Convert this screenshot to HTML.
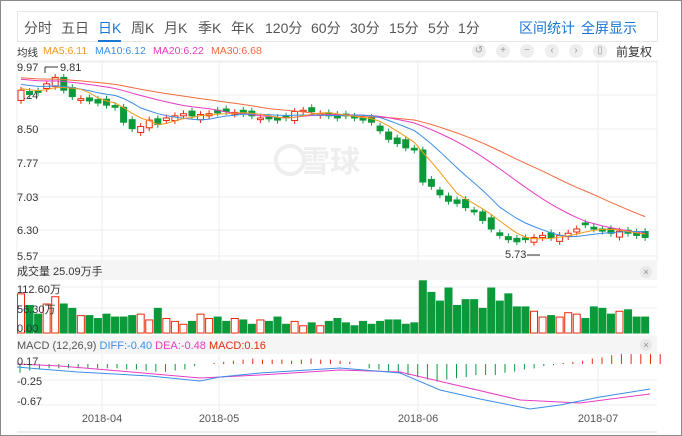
<!DOCTYPE html>
<html><head><meta charset="utf-8"><style>
html,body{margin:0;padding:0;background:#fff}
body{width:682px;height:436px;position:relative;overflow:hidden;font-family:"Liberation Sans","Noto Sans CJK SC",sans-serif}
.frame{position:absolute;left:0;top:0;width:680px;height:434px;border:1px solid #8a8a8a}
.tabs{position:absolute;left:17px;top:11px;width:639px;height:29px;border:1px solid #e6e6e6;background:#fff}
.tabs span{position:absolute;top:6px;font-size:14px;color:#555}
.tabs .a{color:#1a75d2}
.tabs .a:after{content:"";position:absolute;left:0;right:0;top:22px;height:2px;background:#1a75d2}
.tabs .r{color:#1a75d2}
.ma{position:absolute;top:45px;font-size:10.5px;white-space:nowrap}
.ic{position:absolute;top:44px;width:14px;height:14px;border-radius:7px;background:#eee;color:#999;font-size:10px;line-height:14px;text-align:center}
</style></head><body>
<div class="frame"></div>
<div class="tabs">
<span style="left:6px">分时</span><span style="left:43px">五日</span><span class="a" style="left:80px">日K</span><span style="left:113px">周K</span><span style="left:146px">月K</span><span style="left:180px">季K</span><span style="left:213px">年K</span><span style="left:247px">120分</span><span style="left:293px">60分</span><span style="left:332px">30分</span><span style="left:371px">15分</span><span style="left:410px">5分</span><span style="left:440px">1分</span>
<span class="r" style="left:501px">区间统计</span><span class="r" style="left:563px">全屏显示</span>
</div>
<span class="ma" style="left:17px;color:#333">均线</span><span class="ma" style="left:43px;color:#f39a1c">MA5:6.11</span><span class="ma" style="left:95px;color:#3b8ee6">MA10:6.12</span><span class="ma" style="left:153px;color:#e83bc2">MA20:6.22</span><span class="ma" style="left:211px;color:#f36a3e">MA30:6.68</span>
<div class="ic" style="left:472px">↺</div><div class="ic" style="left:496px">+</div><div class="ic" style="left:520px">−</div><div class="ic" style="left:545px">‹</div><div class="ic" style="left:569px">›</div><div class="ic" style="left:593px">▯</div>
<div style="position:absolute;left:616px;top:43px;font-size:12px;color:#333">前复权</div>
<svg id="s" width="682" height="436" style="position:absolute;left:0;top:0" font-family="Liberation Sans,Noto Sans CJK SC,sans-serif"></svg>
<script>
var S='';
function L(x1,y1,x2,y2,c,w){S+='<line x1="'+x1+'" y1="'+y1+'" x2="'+x2+'" y2="'+y2+'" stroke="'+c+'" stroke-width="'+(w||1)+'"/>';}
function T(x,y,t,c,s,a){S+='<text x="'+x+'" y="'+y+'" fill="'+(c||'#333')+'" font-size="'+(s||11)+'"'+(a?' text-anchor="'+a+'"':'')+'>'+t+'</text>';}
S+='<rect x="17" y="61" width="640" height="200" fill="#fff" stroke="#eee"/>';
[62,95,129,163,197,230,256].forEach(function(y){L(17,y,657,y,'#eceef2');});
[102,219,418,598].forEach(function(x){L(x,61,x,412,'#eceef2');});
T(17,71,'9.97','#333',11);T(17,99,'9.24');T(17,133,'8.50');T(17,167,'7.77');T(17,201,'7.03');T(17,234,'6.30');T(17,260,'5.57');
S+='<text x="300" y="172" fill="#eeeeee" font-size="30" font-weight="bold">雪球</text><circle cx="290" cy="160" r="14" fill="none" stroke="#eee" stroke-width="4"/>';
var c=[9.45,9.35,9.40,9.60,9.75,9.45,9.30,9.25,9.20,9.15,9.10,9.05,8.70,8.55,8.60,8.75,8.65,8.80,8.85,8.90,8.85,8.88,8.90,8.92,8.95,8.93,8.90,8.85,8.80,8.78,8.75,8.80,8.95,8.98,8.95,8.90,8.85,8.80,8.85,8.80,8.75,8.70,8.50,8.30,8.20,8.10,8.05,7.30,7.20,7.00,6.85,6.80,6.70,6.60,6.40,6.20,6.05,5.95,5.90,5.95,6.00,6.05,6.00,6.05,6.10,6.20,6.30,6.20,6.15,6.10,6.15,6.10,6.05,6.00];
var n=c.length;function X(i){return 21+i*8.55;}function Y(p){return 68+(9.97-p)*42.7;}
var o=[];for(var i=0;i<n;i++){var op=(i==0?9.3:c[i-1])+((i*37%7)-3)*0.03;if(Math.abs(op-c[i])<0.03)op+=0.05;o.push(op);}
function ma(k,pad){var pts=[];for(var i=0;i<n;i++){var s=0;for(var j=i-k+1;j<=i;j++){s+=(j<0?pad:c[j]);}pts.push(X(i).toFixed(1)+','+Y(s/k).toFixed(1));}return pts.join(' ');}
for(var i=0;i<n;i++){var up=c[i]>o[i],col=up?'#e8290b':'#0b9a3a',hi=Math.max(c[i],o[i])+0.08,lo=Math.min(c[i],o[i])-0.08,y1=Y(Math.max(c[i],o[i])),y2=Y(Math.min(c[i],o[i]));
L(X(i),Y(hi),X(i),Y(lo),col);
S+='<rect x="'+(X(i)-3)+'" y="'+y1+'" width="6" height="'+Math.max(1,y2-y1)+'" fill="'+(up?'#fff':col)+'" stroke="'+col+'" stroke-width="1"/>';}
[[30,9.75,'#f36a3e'],[20,9.72,'#e83bc2'],[10,9.6,'#3b8ee6'],[5,9.5,'#f39a1c']].forEach(function(a){S+='<polyline points="'+ma(a[0],a[1])+'" fill="none" stroke="'+a[2]+'" stroke-width="1"/>';});
L(45,67,58,67,'#333');L(45,67,45,73,'#333');T(60,71,'9.81');
L(540,255,527,255,'#333');T(505,258,'5.73');
S+='<rect x="17" y="262" width="640" height="18" fill="#f5f5f5"/>';T(17,275,'成交量 25.09万手','#333',11);
S+='<circle cx="646" cy="272" r="6" fill="#e8e8e8"/>';T(646,275,'×','#888',9,'middle');
L(17,287,657,287,'#eceef2');L(17,308,657,308,'#eceef2');
var v=[27,19,13,20,25,20,17,12,12,10,13,11,11,12,13,9,17,10,8,6,8,13,10,11,8,10,9,6,9,8,11,6,8,5,7,5,8,10,7,5,8,6,8,9,9,6,7,36,28,22,31,19,23,23,17,31,22,27,18,18,15,11,12,11,14,13,10,18,17,13,15,16,11,11];
for(var i=0;i<n;i++){var vv=v[i]||12,up=c[i]>o[i],col=up?'#e8290b':'#0b9a3a',h=vv*1.45;
S+='<rect x="'+(X(i)-3.5)+'" y="'+(333-h)+'" width="7" height="'+h+'" fill="'+(up?'#fff':col)+'" stroke="'+col+'"/>';}
T(17,293,'112.60万');T(17,313,'56.30万');T(17,332,'0.00');
S+='<rect x="17" y="336" width="640" height="18" fill="#f5f5f5"/>';
S+='<text x="17" y="349" font-size="11"><tspan fill="#555">MACD (12,26,9) </tspan><tspan fill="#3b8ee6">DIFF:-0.40 </tspan><tspan fill="#e83bc2">DEA:-0.48 </tspan><tspan fill="#e8290b">MACD:0.16</tspan></text>';
S+='<circle cx="646" cy="345" r="6" fill="#e8e8e8"/>';T(646,348,'×','#888',9,'middle');
L(17,380,657,380,'#eceef2');L(17,405,657,405,'#eceef2');
var m=[-8,-6,-5,-4,-4,-4,-4,-4,-4,-4,-4,-5,-5,-6,-7,-7,-6,-5,-2,0,1,2,3,4,5,4,4,4,3,4,5,4,4,3,2,0,-4,-5,-7,-8,-10,-12,-14,-16,-14,-13,-12,-10,-10,-10,-8,-7,-5,-4,-2,-1,1,2,3,5,6,8,9,9,9,9,9];
for(var i=0;i<m.length;i++){var x=20+i*9.7,h=m[i]*1.1;L(x,364,x,364-h,h>0?'#e8290b':'#0b9a3a');}
S+='<polyline points="17,364 60,366 120,371 200,378 260,375 340,370 400,372 460,386 520,400 580,403 650,394" fill="none" stroke="#e83bc2"/>';
S+='<polyline points="17,367 40,369 78,372 150,376 200,381 220,377 260,373 340,368 400,373 440,390 480,399 530,409 560,405 600,397 650,389" fill="none" stroke="#3b8ee6"/>';
T(17,365,'0.17');T(17,385,'-0.25');T(17,405,'-0.67');
T(102,422,'2018-04','#555',11,'middle');T(219,422,'2018-05','#555',11,'middle');T(418,422,'2018-06','#555',11,'middle');T(598,422,'2018-07','#555',11,'middle');
L(17,432,657,432,'#ddd');
document.getElementById('s').innerHTML=S;
</script>
</body></html>
